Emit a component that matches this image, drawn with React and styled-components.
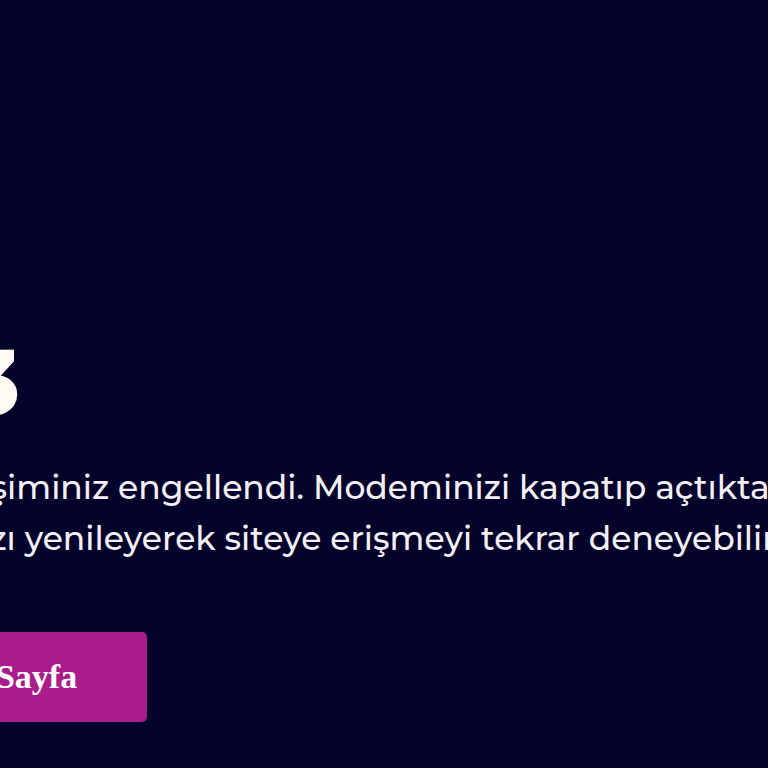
import React from "react";
import styled, { createGlobalStyle } from "styled-components";

const GlobalStyle = createGlobalStyle`
  html, body {
    margin: 0;
    height: 100%;
    background: #03022a;
    overflow: hidden;
  }
  body {
    font-family: "Montserrat", "DejaVu Sans", sans-serif;
    color: #f4f0f4;
  }
`;

const Page = styled.main`
  min-height: 100vh;
  background: #03022a;
  overflow: hidden;
`;

const Column = styled.section`
  display: flex;
  flex-direction: column;
  align-items: flex-start;
  padding-top: 338px;
  margin-left: -162px;
`;

const Code = styled.h1`
  margin: 0;
  font-family: "Montserrat", "DejaVu Sans", sans-serif;
  font-weight: 800;
  font-size: 92px;
  line-height: 88px;
  color: #fffaf4;
  white-space: nowrap;
`;

const Message = styled.p`
  margin: 36px 0 0;
  font-size: 33px;
  font-weight: 500;
  line-height: 51px;
  white-space: nowrap;
  color: #f4f0f4;
`;

const Line = styled.span`
  display: block;
`;

const HomeButton = styled.a`
  display: flex;
  align-items: center;
  height: 90px;
  margin-top: 68px;
  padding: 0 70px 0 89px;
  box-sizing: border-box;
  background: #a91d8b;
  border-radius: 5px;
  color: #ffffff;
  font-family: "Liberation Serif", "Times New Roman", serif;
  font-weight: 700;
  font-size: 34px;
  text-decoration: none;
  white-space: nowrap;
  cursor: pointer;
`;

export default function App() {
  return (
    <Page>
      <GlobalStyle />
      <Column>
        <Code>403</Code>
        <Message>
          <Line>Siteye erişiminiz engellendi. Modeminizi kapatıp açtıktan sonra</Line>
          <Line>tarayıcınızı yenileyerek siteye erişmeyi tekrar deneyebilirsiniz.</Line>
        </Message>
        <HomeButton href="#">Ana Sayfa</HomeButton>
      </Column>
    </Page>
  );
}
